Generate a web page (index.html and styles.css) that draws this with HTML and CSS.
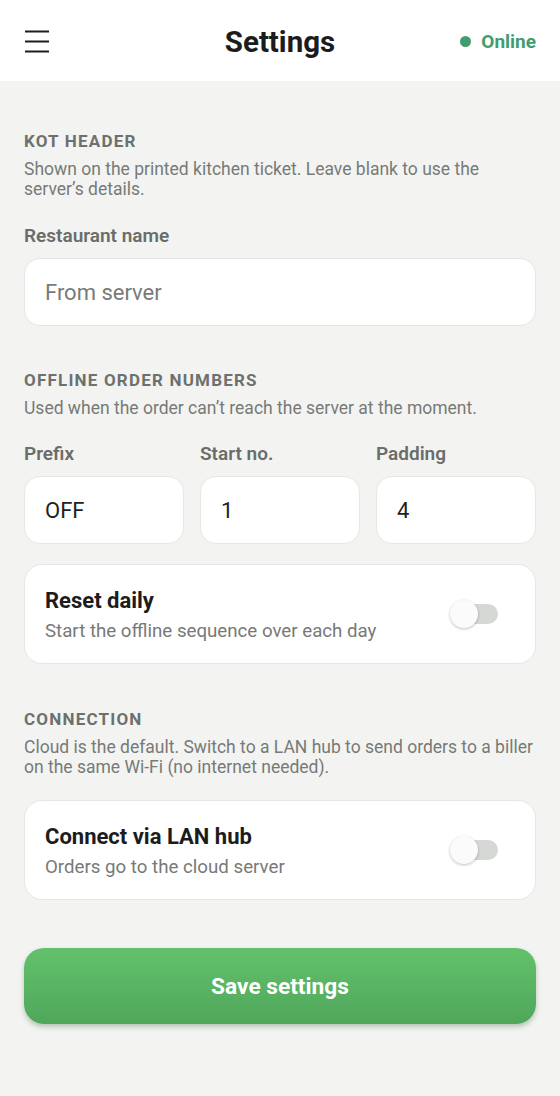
FILE: index.html
```html
<!DOCTYPE html>
<html lang="en">
<head>
<meta charset="utf-8">
<title>Settings</title>
<link rel="stylesheet" href="styles.css">
</head>
<body>
<header class="topbar">
  <button class="menu-btn" aria-label="Menu">
    <svg width="26" height="24" viewBox="0 0 26 24"><path d="M1 2.5h24M1 12.5h24M1 22.5h24" stroke="#1e1e1e" stroke-width="2.2" fill="none"/></svg>
  </button>
  <h1 class="title">Settings</h1>
  <div class="status"><span class="dot"></span>Online</div>
</header>
<main class="content">
  <section class="section">
    <h2 class="section-title">KOT HEADER</h2>
    <p class="section-desc">Shown on the printed kitchen ticket. Leave blank to use the server’s details.</p>
    <label class="field-label">Restaurant name</label>
    <div class="input placeholder">From server</div>
  </section>

  <section class="section">
    <h2 class="section-title">OFFLINE ORDER NUMBERS</h2>
    <p class="section-desc">Used when the order can’t reach the server at the moment.</p>
    <div class="field-row">
      <div class="field">
        <label class="field-label">Prefix</label>
        <div class="input">OFF</div>
      </div>
      <div class="field">
        <label class="field-label">Start no.</label>
        <div class="input">1</div>
      </div>
      <div class="field">
        <label class="field-label">Padding</label>
        <div class="input">4</div>
      </div>
    </div>
    <div class="card toggle-card">
      <div class="card-text">
        <div class="card-title">Reset daily</div>
        <div class="card-sub">Start the offline sequence over each day</div>
      </div>
      <div class="switch"><span class="thumb"></span></div>
    </div>
  </section>

  <section class="section">
    <h2 class="section-title">CONNECTION</h2>
    <p class="section-desc">Cloud is the default. Switch to a LAN hub to send orders to a biller on the same Wi-Fi (no internet needed).</p>
    <div class="card toggle-card conn-card">
      <div class="card-text">
        <div class="card-title">Connect via LAN hub</div>
        <div class="card-sub">Orders go to the cloud server</div>
      </div>
      <div class="switch"><span class="thumb"></span></div>
    </div>
  </section>

  <button class="save-btn">Save settings</button>
</main>
</body>
</html>
```
FILE: styles.css
```css
* { box-sizing: border-box; }
html, body { margin: 0; padding: 0; }
body {
  background: #f3f4f2;
  font-family: Roboto, "Noto Sans", "Liberation Sans", sans-serif;
  color: #1e1e1e;
  width: 560px;
  min-height: 1096px;
}
.topbar {
  height: 81px;
  background: #ffffff;
  display: flex;
  align-items: center;
  justify-content: space-between;
  padding: 0 24px 0 24px;
  position: relative;
}
.menu-btn {
  background: none;
  border: 0;
  padding: 0;
  width: 26px;
  height: 24px;
  display: flex;
  margin-top: 1px;
}
.title {
  margin: 0;
  font-size: 29.5px;
  font-weight: 700;
  color: #1c1c1c;
  position: absolute;
  left: 0;
  right: 0;
  text-align: center;
  pointer-events: none;
  line-height: 81px;
  top: 2px;
}
.status {
  display: flex;
  align-items: center;
  gap: 10px;
  font-size: 19px;
  font-weight: 700;
  color: #3f9d6f;
  margin-top: 1px;
}
.dot {
  width: 11px;
  height: 11px;
  border-radius: 50%;
  background: #3f9d6f;
}
.content {
  padding: 50px 24px 40px;
}
.section { margin-bottom: 44px; }
.section:nth-of-type(2) { margin-bottom: 45px; }
.section:last-of-type { margin-bottom: 48px; }
.section-title {
  margin: 0;
  font-size: 17px;
  line-height: 20px;
  font-weight: 700;
  letter-spacing: 1.2px;
  color: #6d716d;
}
.section-desc {
  margin: 8px 0 0;
  font-size: 17.5px;
  line-height: 20px;
  color: #777a77;
}
.field-label {
  display: block;
  margin-top: 26px;
  font-size: 19px;
  line-height: 22px;
  font-weight: 600;
  color: #6a6d6a;
}
.input {
  margin-top: 11px;
  height: 68px;
  background: #ffffff;
  border: 1px solid #e6e7e5;
  border-radius: 16px;
  padding: 0 20px;
  display: flex;
  align-items: center;
  font-size: 22px;
  color: #222;
}
.input.placeholder { color: #787b78; }
.field-row {
  display: grid;
  grid-template-columns: repeat(3, 1fr);
  gap: 16px;
}
.field-row .field-label { margin-top: 25px; }
.card {
  background: #ffffff;
  border: 1px solid #e6e7e5;
  border-radius: 18px;
}
.toggle-card {
  margin-top: 20px;
  height: 100px;
  padding: 0 37px 0 20px;
  display: flex;
  align-items: center;
  justify-content: space-between;
}
.conn-card { margin-top: 23px; }
.card-title {
  font-size: 22px;
  line-height: 28px;
  font-weight: 700;
  color: #1c1c1c;
}
.card-sub {
  margin-top: 5px;
  font-size: 18.7px;
  line-height: 22px;
  color: #777a77;
}
.switch {
  position: relative;
  width: 44px;
  height: 20px;
  border-radius: 10px;
  background: #d6d8d5;
}
.thumb {
  position: absolute;
  left: -4px;
  top: -4px;
  width: 28px;
  height: 28px;
  border-radius: 50%;
  background: #fbfbfb;
  box-shadow: 0 1px 3px rgba(0,0,0,0.25);
}
.save-btn {
  display: block;
  width: 100%;
  height: 76px;
  border: 0;
  border-radius: 20px;
  background: linear-gradient(180deg, #62c16b 0%, #50a75b 100%);
  box-shadow: 0 3px 5px rgba(40, 90, 45, 0.3);
  color: #ffffff;
  font-family: inherit;
  font-size: 22.7px;
  font-weight: 700;
}
```
